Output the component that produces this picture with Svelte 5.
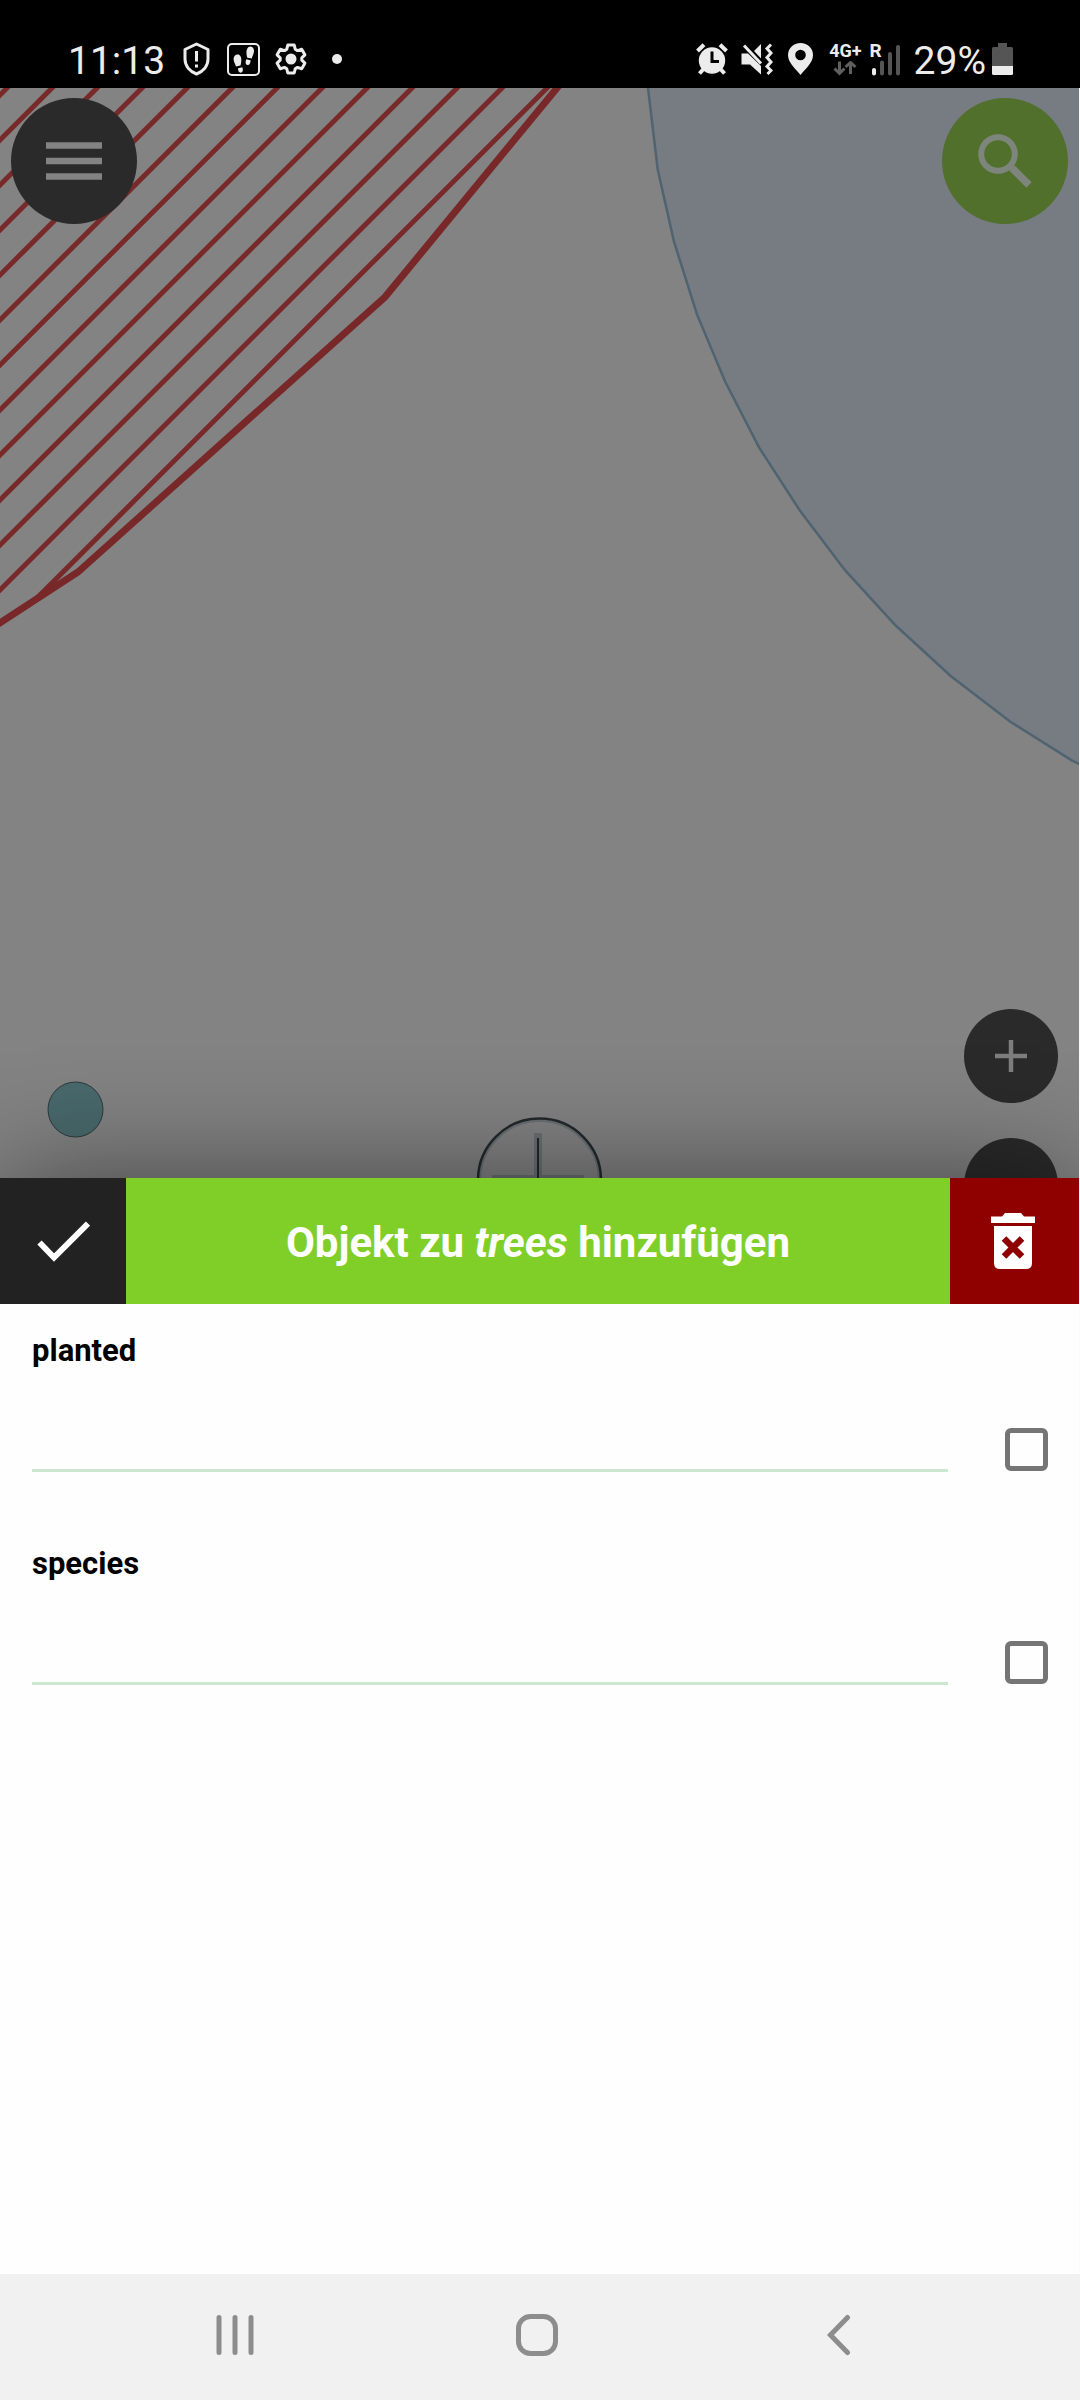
<script>
  const hatch = Array.from({ length: 13 }, (_, k) => 7 + 45 * k);
  let fields = $state([
    { name: 'planted', value: '', keep: false },
    { name: 'species', value: '', keep: false }
  ]);
</script>

<div class="screen">
  <header class="status">
    <div class="left">
      <span class="clock">11:13</span>
      <svg class="shield" width="27" height="34" viewBox="0 0 27 34" fill="none" stroke="#ececec" stroke-width="3">
        <path d="M13.500 2 L25 7.500 V17 C25 24 20 29.500 13.500 32 C7 29.500 2 24 2 17 V7.500 Z" stroke-linejoin="round" />
        <path d="M13.500 9 V19.500 M13.500 22.500 V25.500" />
      </svg>
      <svg class="steps" width="33" height="33" viewBox="0 0 33 33">
        <rect x="1" y="1" width="31" height="31" rx="4" fill="none" stroke="#ececec" stroke-width="2" />
        <g fill="#ececec">
          <path d="M10 11.500 C13 11 14.500 14 14.300 17 C14.200 19.500 14 21 13.500 22.500 L9 23.500 C8.500 21 6.500 19 6.600 16 C6.700 13.500 8 11.800 10 11.500 Z" />
          <path d="M11 25.300 L15.300 24.300 C16.500 27.500 15.500 29.600 13.800 29.700 C12 29.800 11 28 11 25.300 Z" />
          <path d="M23.500 3.500 C20.500 3.500 19.300 7 19.500 10 C19.600 12 19.800 13.500 20.300 14.800 L24.800 15.500 C25.200 13 27 11 27 8 C27 5.500 25.500 3.600 23.500 3.500 Z" />
          <path d="M19.300 16.300 L23.600 17.300 C23.500 20.500 22.300 22.300 20.500 22 C18.500 21.700 18 19.500 19.300 16.300 Z" />
        </g>
      </svg>
      <svg class="gear" width="32" height="32" viewBox="0 0 32 32">
        <path d="M12.800 2 H19.200 L20.200 6.200 L22.500 7.600 L26.700 6.300 L29.900 11.800 L26.800 14.800 V17.200 L29.900 20.200 L26.700 25.700 L22.500 24.400 L20.200 25.800 L19.200 30 H12.800 L11.800 25.800 L9.500 24.400 L5.300 25.700 L2.100 20.200 L5.200 17.200 V14.800 L2.100 11.800 L5.300 6.300 L9.500 7.600 L11.800 6.200 Z" fill="none" stroke="#ececec" stroke-width="3" stroke-linejoin="round" />
        <circle cx="16" cy="16" r="5.500" fill="#ececec" />
      </svg>
      <span class="dot"></span>
    </div>
    <div class="right">
      <svg width="32" height="32" viewBox="0 0 32 32">
        <circle cx="16" cy="17.500" r="13.200" fill="#ececec" />
        <path d="M1.500 8 L8 1.800 M30.500 8 L24 1.800" stroke="#ececec" stroke-width="4" />
        <path d="M7.500 26 L3.500 30.500 M24.500 26 L28.500 30.500" stroke="#ececec" stroke-width="4" />
        <path d="M16 8.500 V18.500 H23" fill="none" stroke="#000" stroke-width="3" />
      </svg>
      <svg class="mute" width="32" height="32" viewBox="0 0 32 32">
        <path d="M0.500 10.500 H7 L20 23 V31.500 L9 21.500 H0.500 Z" fill="#ececec" />
        <path d="M20 1 V15.500 L13 8 Z" fill="#ececec" />
        <path d="M3 2.500 L20 20.500" stroke="#ececec" stroke-width="3" />
        <path d="M30 1.500 L26 5.500 L30 10 L26 14.500 L30 19 L26 23.500 L30 27.500 L26.500 31" fill="none" stroke="#ececec" stroke-width="3" />
      </svg>
      <svg class="pin" width="25" height="32" viewBox="0 0 25 32">
        <path fill-rule="evenodd" d="M12.500 0 C5.500 0 0 5.300 0 12 C0 20 8 26 12.500 32 C17 26 25 20 25 12 C25 5.300 19.500 0 12.500 0 Z M12.500 6.700 A5.300 5.300 0 1 1 12.500 17.300 A5.300 5.300 0 1 1 12.500 6.700 Z" fill="#ececec" />
      </svg>
      <div class="network">
        <span>4G+</span>
        <svg width="24" height="15" viewBox="0 0 24 15" fill="none" stroke="#5f5f5f" stroke-width="3">
          <path d="M6.500 0.500 V12 M1.500 7.500 L6.500 12.500 L11.500 7.500 M17.500 13 V2 M12.500 6 L17.500 1.500 L22.500 6" />
        </svg>
      </div>
      <div class="signal">
        <span>R</span>
        <svg width="31" height="34" viewBox="0 0 31 34" stroke-width="4" stroke-linecap="round">
          <path d="M4 28 V31.500" stroke="#ececec" />
          <path d="M12 20.500 V31.500 M20 12 V31.500 M28 5 V31.500" stroke="#555" />
        </svg>
      </div>
      <span class="charge">29%</span>
      <svg width="21" height="32" viewBox="0 0 21 32">
        <path d="M6 0 H15 V4 H19.500 Q21 4 21 6 V23 H0 V6 Q0 4 1.500 4 H6 Z" fill="#555" />
        <path d="M0 23 H21 V30.500 Q21 32 19.500 32 H1.500 Q0 32 0 30.500 Z" fill="#ececec" />
      </svg>
    </div>
  </header>

  <main>
    <section class="map" aria-label="Karte">
      <svg class="canvas" viewBox="0 88 1079 1090" preserveAspectRatio="xMidYMin slice">
        <path
          d="M648 80 V88 L657.700 169.300 L674 241.600 L697 314.400 L725 381.300 L759.300 447.900 L800 510.800 L845 570.200 L895.700 625.500 L950.700 676 L1010.700 722 L1071.700 760.400 L1090 769 V80 Z"
          fill="#777c83" stroke="#4f6371" stroke-width="2.500" />
        <clipPath id="area"><path d="M0 0 H623 L557 88 L385 297 L78 572 L0 623 Z" /></clipPath>
        <g clip-path="url(#area)" stroke="#782a2b" stroke-width="5">
          {#each hatch as x}
            <path d="M{x + 40} 48 L{x - 620} 708" />
          {/each}
        </g>
        <path d="M623 8 L557 88 L385 297 L78 572 L-20 636" fill="none" stroke="#782829" stroke-width="7" />
        <circle cx="75.500" cy="1109.500" r="27.500" fill="#49696c" stroke="#2c3a3b" stroke-width="1" />
        <g fill="none">
          <circle cx="539.500" cy="1180.500" r="60" stroke="#6a7073" stroke-width="3" />
          <path d="M538 1133 V1227 M492 1179 H584" stroke="#6a7073" stroke-width="8" />
          <circle cx="539.500" cy="1180" r="61.500" stroke="#23292b" stroke-width="2.500" />
          <path d="M538 1138 V1222 M497 1181 H580" stroke="#23292b" stroke-width="2" />
        </g>
      </svg>
      <button class="round menu" aria-label="Menü">
        <svg width="56" height="38" viewBox="0 0 56 38" stroke="#838383" stroke-width="6.500">
          <path d="M0 3.500 H56 M0 19 H56 M0 34.500 H56" />
        </svg>
      </button>
      <button class="round search" aria-label="Suchen">
        <svg width="54" height="54" viewBox="0 0 54 54" fill="none" stroke="#7e857d">
          <circle cx="20" cy="20" r="16.800" stroke-width="6" />
          <path d="M34 34 L51 51" stroke-width="7.500" />
          <path d="M31.500 31.500 L36 36" stroke-width="5" />
        </svg>
      </button>
      <div class="zoom">
        <button class="round" aria-label="Vergrößern">
          <svg width="32" height="32" viewBox="0 0 32 32" stroke="#7e7e7e" stroke-width="4.500">
            <path d="M16 0 V32 M0 16 H32" />
          </svg>
        </button>
        <button class="round" aria-label="Verkleinern">
          <svg width="32" height="32" viewBox="0 0 32 32" stroke="#7e7e7e" stroke-width="4.500">
            <path d="M0 16 H32" />
          </svg>
        </button>
      </div>
    </section>

    <section class="sheet">
      <div class="bar">
        <button class="ok" aria-label="Speichern">
          <svg width="54" height="42" viewBox="0 0 54 42" fill="none" stroke="#fff" stroke-width="6">
            <path d="M3.500 22.500 L18 37.500 L52 3.500" />
          </svg>
        </button>
        <h1>Objekt zu <em>trees</em> hinzufügen</h1>
        <button class="remove" aria-label="Verwerfen">
          <svg width="44" height="56" viewBox="0 0 44 56">
            <path d="M0 3.500 H11 L14 0 H30 L33 3.500 H44 V10 H0 Z" fill="#fff" />
            <path d="M3 13 H41 V50 Q41 56 35 56 H9 Q3 56 3 50 Z" fill="#fff" />
            <path d="M13 25.500 L31 43.500 M31 25.500 L13 43.500" stroke="#8f0000" stroke-width="6.500" />
          </svg>
        </button>
      </div>
      <form>
        {#each fields as field}
          <div class="field">
            <label for={field.name}>{field.name}</label>
            <div class="row">
              <input class="text" id={field.name} type="text" bind:value={field.value} />
              <input class="tick" type="checkbox" aria-label="{field.name} merken" bind:checked={field.keep} />
            </div>
          </div>
        {/each}
      </form>
    </section>
  </main>

  <nav>
    <button aria-label="Letzte Apps">
      <svg width="38" height="42" viewBox="0 0 38 42" stroke="#8d8d8d" stroke-width="5" stroke-linecap="round">
        <path d="M3 3.500 V38.500 M19 3.500 V38.500 M35 3.500 V38.500" />
      </svg>
    </button>
    <button aria-label="Startseite">
      <svg width="42" height="42" viewBox="0 0 42 42" fill="none" stroke="#8d8d8d" stroke-width="5">
        <rect x="2.500" y="2.500" width="37" height="37" rx="12" />
      </svg>
    </button>
    <button aria-label="Zurück">
      <svg width="24" height="42" viewBox="0 0 24 42" fill="none" stroke="#8d8d8d" stroke-width="5" stroke-linecap="round">
        <path d="M20.500 3.500 L3.500 21 L20.500 38.500" />
      </svg>
    </button>
  </nav>
</div>

<style>
  :global(body) {
    margin: 0;
    background: #fefefe;
  }
  .screen {
    display: flex;
    flex-direction: column;
    min-height: 100vh;
    font-family: Roboto, sans-serif;
  }
  svg {
    display: block;
    flex: none;
  }
  button {
    display: flex;
    align-items: center;
    justify-content: center;
    padding: 0;
    border: 0;
    background: none;
  }
  .status {
    box-sizing: border-box;
    height: 88px;
    padding: 31px 67px 0 68px;
    display: flex;
    align-items: flex-start;
    justify-content: space-between;
    background: #000;
    color: #ececec;
  }
  .left,
  .right {
    display: flex;
    align-items: center;
    height: 56px;
  }
  .clock,
  .charge {
    font-size: 39px;
    line-height: 56px;
    padding-top: 4px;
  }
  .shield {
    margin-left: 18px;
  }
  .steps {
    margin-left: 17px;
  }
  .gear {
    margin-left: 15px;
  }
  .dot {
    width: 10px;
    height: 10px;
    margin-left: 25px;
    border-radius: 50%;
    background: #ececec;
  }
  .mute {
    margin-left: 13px;
  }
  .pin {
    margin-left: 15px;
  }
  .network {
    display: flex;
    flex-direction: column;
    gap: 1px;
    margin-left: 16px;
    font-size: 18px;
    font-weight: 700;
    line-height: 18px;
  }
  .network svg {
    margin-left: 4px;
  }
  .signal {
    display: grid;
    margin: 0 13px 0 8px;
    font-size: 19px;
    font-weight: 700;
    line-height: 18px;
  }
  .signal > * {
    grid-area: 1 / 1;
  }
  .charge {
    margin-right: 6px;
  }
  main {
    flex: 1;
    display: flex;
    flex-direction: column;
    overflow: hidden;
    border-right: 1px solid #fafafa;
  }
  .map {
    position: relative;
    flex: 1090 1 0;
    overflow: hidden;
    background: #838383;
  }
  .canvas {
    position: absolute;
    width: 100%;
    height: 100%;
  }
  .round {
    width: 94px;
    height: 94px;
    border-radius: 50%;
    background: #2a2a2a;
  }
  .menu,
  .search {
    position: absolute;
    top: 10px;
    width: 126px;
    height: 126px;
  }
  .menu {
    left: 11px;
  }
  .search {
    right: 11px;
    background: #51702b;
  }
  .zoom {
    position: absolute;
    right: 21px;
    bottom: -54px;
    display: grid;
    gap: 35px;
  }
  .sheet {
    position: relative;
    flex: 1096 1 0;
    background: #fefefe;
    box-shadow: 0 0 110px rgba(0, 0, 0, 0.48);
  }
  .bar {
    display: flex;
    height: 126px;
    background: #80ce28;
  }
  .ok {
    width: 126px;
    background: #222;
  }
  .remove {
    width: 129px;
    padding-right: 3px;
    background: #8f0000;
  }
  h1 {
    flex: 1;
    margin: 0;
    color: #fff;
    font-size: 42px;
    line-height: 130px;
    font-weight: 700;
    text-align: center;
  }
  form {
    display: grid;
    gap: 45px;
    padding: 28px 31px 0 32px;
  }
  label {
    display: block;
    color: #000;
    font-size: 31px;
    line-height: 38px;
    font-weight: 700;
  }
  .row {
    display: flex;
    align-items: flex-end;
    gap: 57px;
    height: 102px;
  }
  .field {
    height: 168px;
  }
  .row input {
    box-sizing: border-box;
    margin: 0;
    appearance: none;
    background: none;
    outline: none;
  }
  .text {
    flex: 1;
    min-width: 0;
    height: 80px;
    padding: 0;
    border: 0;
    border-bottom: 3px solid #cce6cf;
    font: 32px Roboto, sans-serif;
  }
  .row .tick {
    width: 43px;
    height: 43px;
    margin-bottom: 1px;
    border: 5px solid #757575;
    border-radius: 6px;
  }
  .tick:checked {
    background: #80ce28;
  }
  nav {
    position: relative;
    box-sizing: border-box;
    height: 126px;
    padding: 0 90px 4px 84px;
    display: grid;
    grid-template-columns: repeat(3, 1fr);
    background: #f1f1f1;
  }
</style>
